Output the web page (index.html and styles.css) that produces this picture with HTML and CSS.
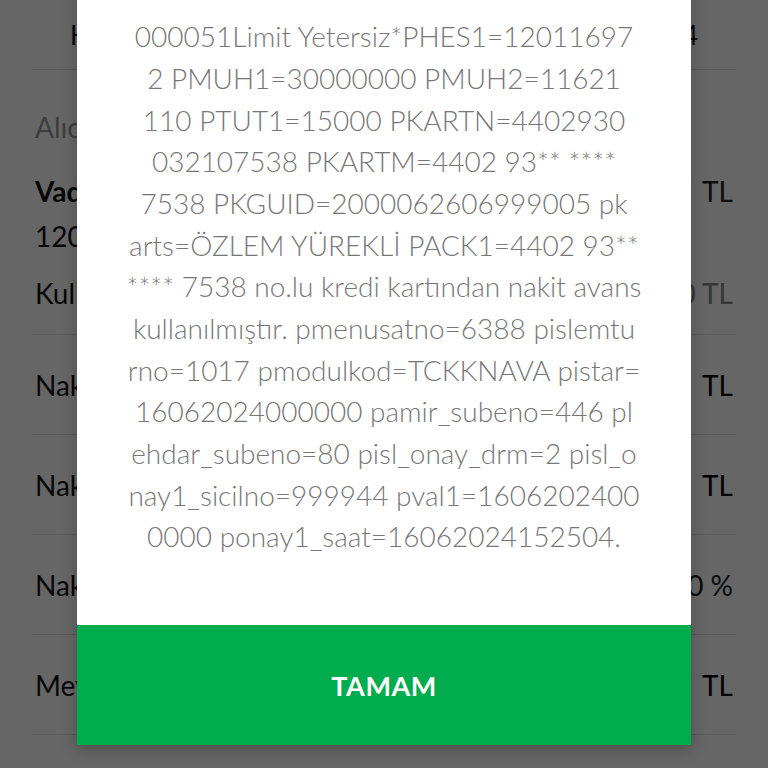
FILE: index.html
```html
<!DOCTYPE html>
<html>
<head>
    <title>Hesap Detayı</title>
    <meta charset="utf-8">
    <link rel="stylesheet" href="styles.css">
</head>
<body>
    <div class="page">
        <div class="tabs">
            <span>Hesap</span>
            <span>14</span>
        </div>

        <div class="block">
            <div class="label">Alıcı</div>
            <div class="line strong">
                <span>Vadesiz</span>
                <span class="value-reg">TL</span>
            </div>
            <div class="line sub">1200</div>
            <div class="line">
                <span>Kullan</span>
                <span class="value-light">0 TL</span>
            </div>
        </div>

        <div class="row">
            <span>Nakit</span>
            <span class="value-dark">TL</span>
        </div>
        <div class="row">
            <span>Nakit</span>
            <span class="value-dark">TL</span>
        </div>
        <div class="row">
            <span>Nakit</span>
            <span class="value-reg">0 %</span>
        </div>
        <div class="row">
            <span>Mevcut</span>
            <span class="value-dark">TL</span>
        </div>
    </div>

    <div class="overlay">
        <div class="modal">
            <div class="message">
                000051Limit Yetersiz*PHES1=12011697<br>
                2 PMUH1=30000000 PMUH2=11621<br>
                110 PTUT1=15000 PKARTN=4402930<br>
                032107538 PKARTM=4402 93** ****<br>
                7538 PKGUID=2000062606999005 pk<br>
                arts=ÖZLEM YÜREKLİ PACK1=4402 93**<br>
                **** 7538 no.lu kredi kartından nakit avans<br>
                kullanılmıştır. pmenusatno=6388 pislemtu<br>
                rno=1017 pmodulkod=TCKKNAVA pistar=<br>
                16062024000000 pamir_subeno=446 pl<br>
                ehdar_subeno=80 pisl_onay_drm=2 pisl_o<br>
                nay1_sicilno=999944 pval1=1606202400<br>
                0000 ponay1_saat=16062024152504.
            </div>
            <button class="ok" type="button">TAMAM</button>
        </div>
    </div>
</body>
</html>
```

FILE: styles.css
```css
html, body {
    margin: 0;
    padding: 0;
}

body {
    width: 768px;
    height: 768px;
    overflow: hidden;
    background: #ffffff;
    font-family: Lato, "Noto Sans", sans-serif;
    position: relative;
}

.page {
    padding: 0 32px;
    color: #111;
    font-size: 28px;
}

.tabs {
    height: 70px;
    display: flex;
    justify-content: space-between;
    align-items: center;
    padding: 0 38px;
    border-bottom: 1px solid #e6e6e6;
    box-sizing: border-box;
    font-size: 26px;
}

.block {
    padding: 36px 3px 0;
    height: 265px;
    box-sizing: border-box;
    border-bottom: 1px solid #e6e6e6;
}

.label {
    color: #999;
    height: 42px;
    line-height: 42px;
}

.line {
    display: flex;
    justify-content: space-between;
    line-height: 44px;
}

.line.strong {
    margin-top: 21px;
    font-weight: 700;
}

.line.sub {
    line-height: 46px;
    margin-bottom: 12px;
}

.row {
    height: 100px;
    padding: 0 3px;
    display: flex;
    justify-content: space-between;
    align-items: center;
    border-bottom: 1px solid #e6e6e6;
    box-sizing: border-box;
}

.value-reg {
    font-weight: 400;
    color: #222;
}

.value-light {
    color: #888;
}

.value-dark {
    color: #000;
}

.overlay {
    position: absolute;
    left: 0;
    top: 0;
    width: 768px;
    height: 768px;
    background: rgba(0, 0, 0, 0.6);
    display: flex;
    justify-content: center;
    align-items: flex-end;
    padding-bottom: 23px;
    box-sizing: border-box;
}

.modal {
    width: 614px;
    background: #ffffff;
    box-shadow: 0 4px 14px rgba(0, 0, 0, 0.25);
}

.message {
    padding: 60px 10px 67px;
    text-align: center;
    color: #777;
    font-size: 28px;
    font-weight: 300;
    line-height: 41.67px;
    white-space: nowrap;
}

.ok {
    display: block;
    width: 100%;
    height: 120px;
    border: none;
    background: #00ac4e;
    color: #ffffff;
    font-family: Lato, "Noto Sans", sans-serif;
    font-size: 27px;
    font-weight: 700;
    letter-spacing: 0.5px;
}
```
